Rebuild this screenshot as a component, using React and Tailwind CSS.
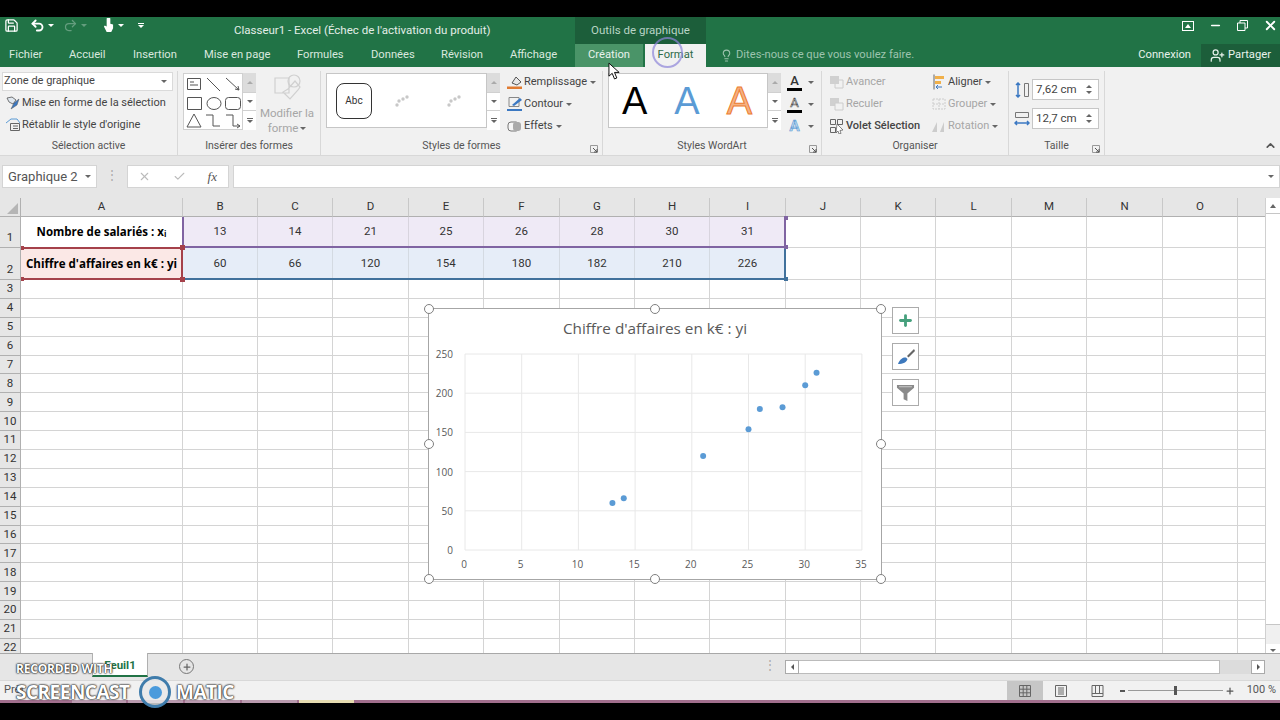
import React from 'react';
import { Check, ChevronUp, Lightbulb, Minus, Plus, Redo2, Save, Undo2, UserPlus, X } from 'lucide-react';

const columns = ['A', 'B', 'C', 'D', 'E', 'F', 'G', 'H', 'I', 'J', 'K', 'L', 'M', 'N', 'O', ''];
const salaries = ['13', '14', '21', '25', '26', '28', '30', '31'];
const revenue = ['60', '66', '120', '154', '180', '182', '210', '226'];
const points = salaries.map((x, i) => [Number(x), Number(revenue[i])]);
const emptyRows = Array.from({ length: 20 }, (_, i) => i + 3);

const tabs = [
  { name: 'Fichier', cls: 'w-[69px] pl-[9px]' },
  { name: 'Accueil', cls: 'w-[64px]' },
  { name: 'Insertion', cls: 'w-[71px]' },
  { name: 'Mise en page', cls: 'w-[93px]' },
  { name: 'Formules', cls: 'w-[74px]' },
  { name: 'Données', cls: 'w-[70px]' },
  { name: 'Révision', cls: 'w-[69px]' },
  { name: 'Affichage', cls: 'w-[65px]' },
];

const Caret = ({ className = '' }) => (
  <span className={`inline-block w-0 h-0 border-x-[3px] border-x-transparent border-t-[3px] border-t-[#666] ${className}`} />
);

const Icon = ({ children, className = 'w-[16px] h-[16px]' }) => (
  <svg viewBox="0 0 16 16" fill="none" className={`shrink-0 ${className}`}>{children}</svg>
);

const GalleryScroll = () => (
  <div className="w-[13px] flex flex-col text-[#666]">
    <div className="h-[19px] bg-[#dcdcdc] flex items-center justify-center"><span className="w-0 h-0 border-x-[3px] border-x-transparent border-b-[3px] border-b-[#aaa]" /></div>
    <div className="h-[19px] bg-white border-y border-[#d0d0d0] flex items-center justify-center"><Caret /></div>
    <div className="h-[19px] bg-white flex flex-col items-center justify-center gap-[1px]"><span className="w-[6px] h-px bg-[#666]" /><Caret /></div>
  </div>
);

const Group = ({ width, label, launcher, children }) => (
  <div className={`${width} relative flex flex-col border-r border-[#d8d8d8] h-[84px] shrink-0`}>
    <div className="h-[67px] flex">{children}</div>
    <div className="h-[16px] flex items-center justify-center text-[10.5px] text-[#555]">{label}</div>
    {launcher && (
      <svg viewBox="0 0 8 8" className="absolute right-[4px] bottom-[2px] w-[8px] h-[8px]">
        <path d="M.5 7.5V.5h7v7z" stroke="#999" fill="none" />
        <path d="M3 3l4 4M7 4v3H4" stroke="#555" fill="none" />
      </svg>
    )}
  </div>
);

const Action = ({ icon, label, muted, caret, bold }) => (
  <div className={`h-[22px] flex items-center gap-[1px] whitespace-nowrap text-[11px] ${muted ? 'text-[#a6a6a6]' : 'text-[#444]'} ${bold ? 'font-medium' : ''}`}>
    {icon}
    <span>{label}</span>
    {caret && <Caret className="ml-[2px]" />}
  </div>
);

const SizeField = ({ value, icon }) => (
  <div className="flex items-center gap-[2px]">
    {icon}
    <div className="w-[67px] h-[21px] bg-white border border-[#c6c6c6] flex items-center justify-between pl-[3px] pr-[6px] text-[11.5px] text-[#444]">
      <span>{value}</span>
      <span className="flex flex-col gap-[3px]">
        <span className="w-0 h-0 border-x-[3px] border-x-transparent border-b-[3px] border-b-[#666]" />
        <Caret />
      </span>
    </div>
  </div>
);

const WordArtA = ({ className }) => (
  <span className={`text-[38px] leading-none font-['Liberation_Sans',sans-serif] ${className}`}>A</span>
);

const Ribbon = () => (
  <div className="h-[88px] bg-[#f1f1f1] flex pt-[4px] shrink-0">
    <Group width="w-[178px]" label="Sélection active">
      <div className="pl-[2px] pt-[1px]">
        <div className="w-[171px] h-[19px] bg-white border border-[#dadada] flex items-center justify-between px-[1px] pr-[5px] text-[11px] text-[#444]">
          <span>Zone de graphique</span><Caret />
        </div>
        <div className="pl-[3px] pt-[1px]">
          <Action label="Mise en forme de la sélection" icon={<Icon><path d="M2 3l5-1 4 3-3 4-4-2z" fill="#dfe7ef" stroke="#555" strokeWidth=".8" /><path d="M6 14l3-6 5-4-2 6z" fill="#3b78c2" stroke="#555" strokeWidth=".5" /></Icon>} />
          <Action label="Rétablir le style d'origine" icon={<Icon><path d="M1 6l5-4h6l3 4" stroke="#5b9bd5" /><path d="M5.500 6.500h9v7h-9zM8 9h5M8 11.500h5" stroke="#666" /></Icon>} />
        </div>
      </div>
    </Group>
    <Group width="w-[143px]" label="Insérer des formes">
      <div className="flex pl-[5px] pt-[2px]">
        <div className="w-[60px] h-[57px] bg-white border border-[#d0d0d0]">
          <svg viewBox="0 0 60 57" className="w-[60px] h-[57px]" fill="none" stroke="#555">
            <path d="M3.500 4.500h13v11h-13zM6 8h4M6 11h8" />
            <path d="M23 4l13 13M42 4l13 12M55 16l-4-1M55 16l-1-4" />
            <path d="M3.500 23.500h14v12h-14z" />
            <ellipse cx="30" cy="29.500" rx="7" ry="6" />
            <rect x="41.500" y="23.500" width="15" height="12" rx="3" />
            <path d="M10 40l7 13H3zM22 41h7v11h7M42 41h7v11h7M56 52l-3-2M56 52l-3 2" />
          </svg>
        </div>
        <GalleryScroll />
        <div className="w-[62px] flex flex-col items-center text-[11.5px] leading-[15px] text-[#a6a6a6]">
          <svg viewBox="0 0 30 30" className="w-[32px] h-[30px]" fill="none" stroke="#d0d0d0" strokeWidth="1.200">
            <path d="M3 5h14v15H3zM16 16l7-8 5 6-2 3-8 9-7-7z" />
            <circle cx="22" cy="8" r="6" />
          </svg>
          <span className="mt-[3px]">Modifier la</span>
          <span className="flex items-center gap-[2px]">forme <Caret /></span>
        </div>
      </div>
    </Group>
    <Group width="w-[282px]" label="Styles de formes" launcher>
      <div className="flex pl-[5px] pt-[2px]">
        <div className="w-[161px] h-[55px] bg-white border border-[#c6c6c6] flex items-center pl-[9px] gap-[23px]">
          <div className="w-[36px] h-[36px] rounded-[8px] border border-[#333] flex items-center justify-center text-[10px] text-[#333]">Abc</div>
          {[0, 1].map(k => (
            <svg key={k} viewBox="0 0 14 14" className="w-[14px] h-[14px] mr-[15px]" fill="#c8c8c8">
              <circle cx="2" cy="11" r="1.700" /><circle cx="4" cy="7" r="1.700" /><circle cx="8" cy="5" r="1.700" /><circle cx="12" cy="3" r="1.700" />
            </svg>
          ))}
        </div>
        <GalleryScroll />
        <div className="pl-[7px] -mt-[2px]">
          <Action label="Remplissage" caret icon={<Icon><path d="M5 9l4-6 5 5-4 3z" fill="#e8e8e8" stroke="#555" /><path d="M0 12.500h15v2.500H0z" fill="#e07b32" /></Icon>} />
          <Action label="Contour" caret icon={<Icon><path d="M2 1.500h10v9H2z" stroke="#888" /><path d="M5 9l8-7 2 2-8 6z" fill="#3b78c2" /><path d="M0 13h15v2H0z" fill="#3b78c2" /></Icon>} />
          <Action label="Effets" caret icon={<Icon><rect x="1" y="4" width="11" height="9" rx="3" fill="#f5f5f5" stroke="#777" /><rect x="6" y="4" width="8" height="9" rx="3" fill="#aaa" /></Icon>} />
        </div>
      </div>
    </Group>
    <Group width="w-[219px]" label="Styles WordArt" launcher>
      <div className="flex pl-[5px] pt-[2px]">
        <div className="w-[160px] h-[55px] bg-white border border-[#c6c6c6] flex items-center justify-between pl-[13px] pr-[15px]">
          <WordArtA className="text-black" />
          <WordArtA className="text-[#5b9bd5]" />
          <WordArtA className="text-[#f4b183] [-webkit-text-stroke:1px_#ed7d31]" />
        </div>
        <GalleryScroll />
        <div className="pl-[6px] -mt-[2px] text-[#666]">
          <div className="h-[22px] flex items-center gap-[6px]">
            <span className="w-[15px] text-center text-[13px] font-medium text-[#333] leading-[14px] border-b-[3px] border-black">A</span><Caret />
          </div>
          <div className="h-[22px] flex items-center gap-[6px]">
            <span className="w-[15px] text-center text-[13px] text-[#ddd] [-webkit-text-stroke:.6px_#555] leading-[14px] border-b-[3px] border-black">A</span><Caret />
          </div>
          <div className="h-[22px] flex items-center gap-[6px]">
            <span className="w-[15px] text-center text-[15px] font-bold text-[#bcd6ee] [-webkit-text-stroke:.6px_#5b9bd5] leading-[15px]">A</span><Caret />
          </div>
        </div>
      </div>
    </Group>
    <Group width="w-[187px]" label="Organiser">
      <div className="flex pl-[7px]">
        <div className="w-[102px]">
          <Action muted label="Avancer" icon={<Icon><path d="M1 2h9v8H1z" fill="#d0d0d0" /><path d="M6 10v4h8V6h-4" stroke="#ccc" /></Icon>} />
          <Action muted label="Reculer" icon={<Icon><path d="M1 2h9v8H1z" fill="#d0d0d0" /><path d="M6 7h8v7H6z" fill="#f1f1f1" stroke="#ccc" /></Icon>} />
          <Action bold label="Volet Sélection" icon={<Icon><path d="M1.500 1.500h5v5h-5zM1.500 9.500h5v5h-5zM8.500 1.500h5v5h-5z" stroke="#666" /><path d="M8 6l6 6-3 .5 1 3-2 .5-1-3-2 2z" fill="#fff" stroke="#555" strokeWidth=".7" /></Icon>} />
        </div>
        <div>
          <Action label="Aligner" caret icon={<Icon><path d="M3 .5v15" stroke="#666" /><path d="M4 2h9v3H4z" fill="#f0b04a" /><path d="M4 7h6v3H4z" fill="#f0b04a" /><path d="M11 13H5M5 13l2-2M5 13l2 2" stroke="#3b78c2" /></Icon>} />
          <Action muted label="Grouper" caret icon={<Icon><path d="M2 3h12v10H2zM2 8h12M8 3v10" stroke="#ccc" strokeDasharray="2 1" /></Icon>} />
          <Action muted label="Rotation" caret icon={<Icon><path d="M1 14L6 4v10zM9 14l4-10v10z" fill="#ccc" /></Icon>} />
        </div>
      </div>
    </Group>
    <Group width="w-[96px]" label="Taille" launcher>
      <div className="flex flex-col pl-[5px] pt-[8px] gap-[8px]">
        <SizeField value="7,62 cm" icon={<svg viewBox="0 0 16 16" className="w-[16px] h-[16px]" fill="none"><path d="M10.500 1.500h4v13h-4z" stroke="#777" /><path d="M4 1v14M2 3l2-2 2 2M2 13l2 2 2-2" stroke="#3b78c2" strokeWidth="1.500" /></svg>} />
        <SizeField value="12,7 cm" icon={<svg viewBox="0 0 16 16" className="w-[16px] h-[16px]" fill="none"><path d="M1.500 1.500h13v5h-13z" stroke="#777" /><path d="M1 12h14M3 10l-2 2 2 2M13 10l2 2-2 2" stroke="#3b78c2" strokeWidth="1.500" /></svg>} />
      </div>
    </Group>
    <div className="flex-1 flex items-end justify-end pr-[3px] pb-[3px]"><ChevronUp className="w-[13px] h-[13px] text-[#555]" strokeWidth={3} /></div>
  </div>
);

const Handle = ({ className }) => (
  <span className={`absolute w-[10px] h-[10px] -ml-[5px] -mt-[5px] rounded-full bg-white border border-[#7f7f7f] ${className}`} />
);

const ChartFloat = () => (
  <div className="absolute left-[428px] top-[110px] w-[454px] h-[272px] bg-white border border-[#a6a6a6]">
    <div className="pt-[8px] text-center text-[15.300px] leading-[22px] text-[#595959] font-['Open_Sans',sans-serif]">Chiffre d'affaires en k€ : yi</div>
    <svg viewBox="0 0 452 270" className="absolute inset-0 w-[452px] h-[270px] font-['Open_Sans',sans-serif]">
      {[0, 1, 2, 3, 4, 5, 6, 7].map(i => (
        <line key={i} x1={36 + i * 56.7} x2={36 + i * 56.7} y1="45" y2="241" stroke="#e8e8e8" />
      ))}
      {[0, 1, 2, 3, 4, 5].map(i => (
        <g key={i}>
          <line x1="36" x2="433" y1={241 - i * 39.2} y2={241 - i * 39.2} stroke="#e8e8e8" />
          <text x="24" y={245 - i * 39.2} textAnchor="end" fontSize="10" fill="#595959">{i * 50}</text>
        </g>
      ))}
      {[0, 1, 2, 3, 4, 5, 6, 7].map(i => (
        <text key={i} x={35 + i * 56.7} y="259" textAnchor="middle" fontSize="10" fill="#595959">{i * 5}</text>
      ))}
      {points.map(([x, y]) => (
        <circle key={x} cx={36 + x * 11.34} cy={241 - y * 0.784} r="3" fill="#5b9bd5" />
      ))}
    </svg>
    <Handle className="left-0 top-0" />
    <Handle className="left-1/2 top-0" />
    <Handle className="left-full top-0" />
    <Handle className="left-0 top-1/2" />
    <Handle className="left-full top-1/2" />
    <Handle className="left-0 top-full" />
    <Handle className="left-1/2 top-full" />
    <Handle className="left-full top-full" />
  </div>
);

const ChartButton = ({ className, children }) => (
  <div className={`absolute left-[892px] w-[27px] h-[27px] bg-white border border-[#ababab] flex items-center justify-center ${className}`}>{children}</div>
);

const Sheet = () => (
  <div className="relative h-[455px] shrink-0 bg-white overflow-hidden">
    <div className="grid grid-cols-[21px_162px_75px_75px_76px_75px_76px_75px_75px_76px_75px_75px_76px_75px_76px_75px_27px_15px] grid-rows-[19px_31px_32px_repeat(20,18.9px)] text-[#333]">
      <div className="bg-[#e6e6e6] border-r border-b border-[#b0b0b0] flex items-end justify-end p-[2px]">
        <span className="w-0 h-0 border-l-[11px] border-l-transparent border-b-[11px] border-b-[#b5b5b5]" />
      </div>
      {columns.map((c, i) => (
        <div key={i} className={`bg-[#e6e6e6] border-b border-[#b0b0b0] flex items-center justify-center text-[11.5px] ${i < 15 ? 'border-r border-r-[#c8c8c8]' : ''}`}>{c}</div>
      ))}
      <div className="row-span-23 bg-[#f0f0f0] border-l border-[#d0d0d0] flex flex-col items-center">
        <div className="w-full h-[16px] bg-white border-b border-[#c6c6c6] flex items-center justify-center"><span className="w-0 h-0 border-x-[3px] border-x-transparent border-b-[4px] border-b-[#666]" /></div>
        <div className="w-full h-[411px] bg-white border-b border-[#c6c6c6]" />
        <div className="flex-1" />
        <div className="w-full h-[14px] bg-white flex items-center justify-center"><Caret /></div>
      </div>

      <div className="bg-[#e6e6e6] border-r border-b border-[#b0b0b0] flex items-end justify-center text-[11.500px] pb-[1px]">1</div>
      <div className="border-r border-b border-[#d4d4d4] flex items-center justify-center font-['Open_Sans',sans-serif] font-bold text-[11.5px] text-black whitespace-nowrap">
        Nombre de salariés : x<sub className="text-[8px]">i</sub>
      </div>
      {salaries.map(v => (
        <div key={v} className="bg-[#efeaf6] border-r border-b border-[#d8d4de] flex items-center justify-center text-[11.5px]">{v}</div>
      ))}
      {[0, 1, 2, 3, 4, 5].map(i => <div key={i} className="border-r border-b border-[#d4d4d4]" />)}
      <div className="border-b border-[#d4d4d4]" />

      <div className="bg-[#e6e6e6] border-r border-b border-[#b0b0b0] flex items-end justify-center text-[11.500px] pb-[1px]">2</div>
      <div className="bg-[#fbe8e6] border-r border-b border-[#d4d4d4] flex items-center justify-center font-['Open_Sans',sans-serif] font-bold text-[11.6px] text-black whitespace-nowrap">
        Chiffre d'affaires en k€ : yi
      </div>
      {revenue.map(v => (
        <div key={v} className="bg-[#e6edf8] border-r border-b border-[#d4dae2] flex items-center justify-center text-[11.5px]">{v}</div>
      ))}
      {[0, 1, 2, 3, 4, 5].map(i => <div key={i} className="border-r border-b border-[#d4d4d4]" />)}
      <div className="border-b border-[#d4d4d4]" />

      {emptyRows.map(r => (
        <React.Fragment key={r}>
          <div className="bg-[#e6e6e6] border-r border-b border-[#b0b0b0] flex items-center justify-center text-[11.5px]">{r}</div>
          {columns.map((c, i) => (
            <div key={i} className={`border-b border-[#d4d4d4] ${i < 15 ? 'border-r' : ''}`} />
          ))}
        </React.Fragment>
      ))}
    </div>

    {/* plages de donnees du graphique */}
    <div className="absolute left-[182px] top-[19px] w-[604px] h-[31px] border-l-2 border-b-2 border-r-2 border-[#8064a2]" />
    <div className="absolute left-[182px] top-[50px] w-[604px] h-[32px] border-b-2 border-r-2 border-[#41719c]" />
    <div className="absolute left-[21px] top-[49px] w-[162px] h-[33px] border-y-2 border-r-2 border-[#a5414a]" />
    <span className="absolute left-[21px] top-[48px] w-[3px] h-[4px] bg-[#a5414a]" />
    <span className="absolute left-[21px] top-[79px] w-[3px] h-[4px] bg-[#a5414a]" />
    <span className="absolute left-[180px] top-[47px] w-[5px] h-[5px] bg-[#a5414a]" />
    <span className="absolute left-[180px] top-[79px] w-[5px] h-[5px] bg-[#a5414a]" />
    <span className="absolute left-[784px] top-[18px] w-[4px] h-[4px] bg-[#8064a2]" />
    <span className="absolute left-[784px] top-[47px] w-[4px] h-[4px] bg-[#8064a2]" />
    <span className="absolute left-[784px] top-[79px] w-[4px] h-[4px] bg-[#41719c]" />

    <ChartFloat />
    <ChartButton className="top-[109px]"><Plus className="w-[17px] h-[17px] text-[#46a07d]" strokeWidth={4} /></ChartButton>
    <ChartButton className="top-[145px]">
      <svg viewBox="0 0 20 20" className="w-[20px] h-[20px]">
        <path d="M18 2l-7 7 1.500 1.500L19 4z" fill="#666" />
        <path d="M2 17c2-6 6-7 8-6.500l1.500 1.500C11 15 7 17 2 17z" fill="#3d79bd" />
      </svg>
    </ChartButton>
    <ChartButton className="top-[181px]">
      <svg viewBox="0 0 20 20" className="w-[19px] h-[19px]">
        <path d="M1 2h18v3l-7 6v8l-4-2v-6L1 5z" fill="#8a8a8a" />
        <path d="M3 3.500h14l-.5 1H3.500z" fill="#c8c8c8" />
      </svg>
    </ChartButton>
  </div>
);

const WatermarkOverlay = () => (
  <div className="absolute left-[16px] top-[660px] text-white font-['Open_Sans',sans-serif] font-bold [text-shadow:0_0_2px_#222,0_0_2px_#222,0_0_1px_#222]">
    <div className="text-[12px] leading-[17px] tracking-[-0.2px]">RECORDED WITH</div>
    <div className="flex items-center text-[19px] leading-[30px] tracking-[-0.5px] -mt-[1px]">
      <span className="w-[123px]">SCREENCAST</span>
      <span className="w-[32px] h-[32px] rounded-full border-[3px] border-[#3f7cab] bg-[#e8e8e8]/80 flex items-center justify-center">
        <span className="w-[13px] h-[13px] rounded-full bg-[#4b9bdc]" />
      </span>
      <span className="ml-[5px]">MATIC</span>
    </div>
  </div>
);

export default function App() {
  return (
    <div className="relative w-[1280px] h-[720px] overflow-hidden bg-black font-['Roboto',sans-serif] text-[#333]">
      <div className="h-[17px]" />

      {/* Titre */}
      <div className="h-[27px] bg-[#217346] flex items-center text-white relative">
        <div className="w-[575px] flex items-center pl-[4px]">
          <Save className="w-[15px] h-[15px] -mt-[10px]" />
          <span className="ml-[11px] -mt-[10px] flex items-center gap-[3px]"><Undo2 className="w-[15px] h-[15px]" strokeWidth={3} /><Caret className="border-t-white" /></span>
          <span className="ml-[9px] -mt-[10px] flex items-center gap-[3px] opacity-30"><Redo2 className="w-[15px] h-[15px]" /><Caret className="border-t-white" /></span>
          <span className="ml-[16px] -mt-[10px] flex items-center gap-[4px]">
            <svg viewBox="0 0 12 16" className="w-[11px] h-[15px]" fill="#fff"><path d="M4 1a2 2 0 014 0v5l3 1v4l-2 4H4L1 9l1-1 2 1z" /></svg>
            <Caret className="border-t-white" />
          </span>
          <span className="ml-[14px] -mt-[10px] flex flex-col items-center gap-[1px]"><span className="w-[6px] h-px bg-white" /><Caret className="border-t-white" /></span>
          <span className="ml-[90px] text-[11.5px] text-[#e3eee8] whitespace-nowrap">Classeur1 - Excel (Échec de l'activation du produit)</span>
        </div>
        <div className="w-[131px] h-full bg-[#1c5e3a] flex items-center justify-center text-[11.5px] text-[#b9d4c5]">Outils de graphique</div>
        <div className="flex-1 flex items-center justify-end gap-[15px] pr-[2px] -mt-[10px]">
          <span className="w-[12px] h-[10px] border border-white flex items-center justify-center"><span className="w-0 h-0 border-x-[3px] border-x-transparent border-b-[4px] border-b-white" /></span>
          <Minus className="w-[13px] h-[13px]" strokeWidth={3} />
          <svg viewBox="0 0 11 11" className="w-[11px] h-[11px]" fill="none" stroke="#fff"><path d="M3 3V.5h7.500V8H8M.5 3h7.500v7.500H.5z" /></svg>
          <X className="w-[15px] h-[15px]" strokeWidth={3} />
        </div>
      </div>

      {/* Onglets */}
      <div className="h-[23px] bg-[#217346] flex items-center text-[11.2px] text-[#d9e8df] whitespace-nowrap">
        {tabs.map(t => <div key={t.name} className={`${t.cls} shrink-0`}>{t.name}</div>)}
        <div className="w-[68px] h-full bg-[#4a9468] flex items-center justify-center text-[#e8f2ec]">Création</div>
        <div className="w-[61px] ml-[2px] h-full bg-[#f1f1f1] flex items-center justify-center text-[#2f6b4a]">Format</div>
        <div className="ml-[14px] flex items-center gap-[3px] text-[#9dc4ae]"><Lightbulb className="w-[13px] h-[13px]" /> Dites-nous ce que vous voulez faire.</div>
        <div className="flex-1" />
        <div className="mr-[10px] text-[#e8f2ec]">Connexion</div>
        <div className="w-[79px] h-full bg-[#1c5e3a] flex items-center justify-center gap-[3px] text-[#e8f2ec]"><UserPlus className="w-[15px] h-[15px]" />Partager</div>
      </div>

      <Ribbon />
      <div className="h-px bg-[#d8d8d8]" />

      {/* Barre de formule */}
      <div className="h-[42px] bg-[#e6e6e6] pt-[9px] flex items-start text-[11.5px]">
        <div className="ml-[2px] w-[95px] h-[23px] bg-white border border-[#d4d4d4] flex items-center justify-between px-[5px] text-[13px] text-[#555]">Graphique 2<Caret /></div>
        <span className="w-[30px] text-center text-[#aaa] leading-[20px]">⋮</span>
        <div className="w-[102px] h-[23px] bg-white border border-[#d4d4d4] flex items-center justify-between pl-[10px] pr-[11px] text-[#bbb]">
          <X className="w-[13px] h-[13px]" />
          <Check className="w-[13px] h-[13px]" />
          <span className="font-['Liberation_Serif',serif] italic text-[13px] text-[#555]">fx</span>
        </div>
        <div className="ml-[4px] flex-1 h-[23px] bg-white border border-[#d4d4d4] flex items-center justify-end pr-[5px]"><Caret /></div>
      </div>

      <Sheet />

      {/* Feuilles */}
      <div className="h-[27px] bg-[#e6e6e6] border-t border-[#a8a8a8] flex">
        <div className="ml-[92px] w-[56px] h-[24px] -mt-px pt-[3px] bg-white border-x border-b-2 border-x-[#b0b0b0] border-b-[#217346] flex items-center justify-center text-[11.5px] font-bold text-[#217346]">Feuil1</div>
        <div className="ml-[31px] mt-[5px] w-[15px] h-[15px] rounded-full border border-[#777] flex items-center justify-center"><Plus className="w-[10px] h-[10px] text-[#666]" strokeWidth={3} /></div>
        <span className="ml-[570px] mt-[2px] text-[#aaa] text-[12px]">⋮</span>
        <div className="ml-[9px] mt-[6px] w-[480px] h-[14px] flex">
          <div className="w-[14px] bg-white border border-[#aaa] flex items-center justify-center"><span className="w-0 h-0 border-y-[3px] border-y-transparent border-r-[3px] border-r-[#555]" /></div>
          <div className="w-[421px] bg-white border-y border-r border-[#bbb]" />
          <div className="flex-1 bg-[#dcdcdc]" />
          <div className="w-[14px] bg-white border border-[#aaa] flex items-center justify-center"><span className="w-0 h-0 border-y-[3px] border-y-transparent border-l-[3px] border-l-[#555]" /></div>
        </div>
      </div>

      {/* Statut */}
      <div className="h-[20px] bg-[#f1f1f1] border-t border-[#d8d8d8] flex items-center text-[11px] text-[#555]">
        <span className="pl-[4px]">Prêt</span>
        <div className="flex-1" />
        <div className="w-[36px] h-full bg-[#c6c6c6] flex items-center justify-center">
          <svg viewBox="0 0 12 12" className="w-[12px] h-[12px]" fill="none" stroke="#666"><path d="M.5.5h11v11H.5zM.5 4.200h11M.5 7.800h11M4.200.5v11M7.800.5v11" /></svg>
        </div>
        <div className="w-[36px] flex justify-center">
          <svg viewBox="0 0 12 12" className="w-[12px] h-[12px]" fill="none" stroke="#666"><path d="M.5.5h11v11H.5zM3 3h6M3 5h6M3 7h6M3 9h6" /></svg>
        </div>
        <div className="w-[36px] flex justify-center">
          <svg viewBox="0 0 12 12" className="w-[13px] h-[12px]" fill="none" stroke="#666"><path d="M.5.5h11v11H.5zM.5 8.500h11M4 .5v8M8 .5v8" /></svg>
        </div>
        <div className="w-[117px] flex items-center ml-[3px]">
          <span className="ml-[2px] w-[5px] h-[2px] bg-[#555]" />
          <div className="ml-[3px] w-[95px] h-px bg-[#999] relative"><span className="absolute left-[46px] -top-[4px] w-[3px] h-[9px] bg-[#555]" /></div>
          <Plus className="ml-[2px] w-[10px] h-[10px] text-[#555]" strokeWidth={3} />
        </div>
        <span className="w-[45px] text-right pr-[4px] whitespace-nowrap">100 %</span>
      </div>

      {/* Barre des taches */}
      <div className="h-[3px] bg-[#a16f8d] flex">
        <span className="ml-[72px] w-[54px] bg-[#b99aae]" />
        <span className="ml-[2px] w-[55px] bg-[#b99aae]" />
        <span className="ml-[2px] w-[55px] bg-[#b99aae]" />
        <span className="ml-[2px] w-[55px] bg-[#b99aae]" />
        <span className="ml-[2px] w-[55px] bg-[#e6dcb0]" />
      </div>

      {/* Curseur et clic */}
      <div className="absolute left-[652px] top-[37px] w-[31px] h-[31px] rounded-full border-2 border-[#8d84d8]/70" />
      <svg viewBox="0 0 14 20" className="absolute left-[608px] top-[62px] w-[13px] h-[19px]">
        <path d="M1 1v14l3.500-3 2.500 6 2.500-1-2.500-6h5z" fill="#fff" stroke="#000" />
      </svg>
      <WatermarkOverlay />
    </div>
  );
}
